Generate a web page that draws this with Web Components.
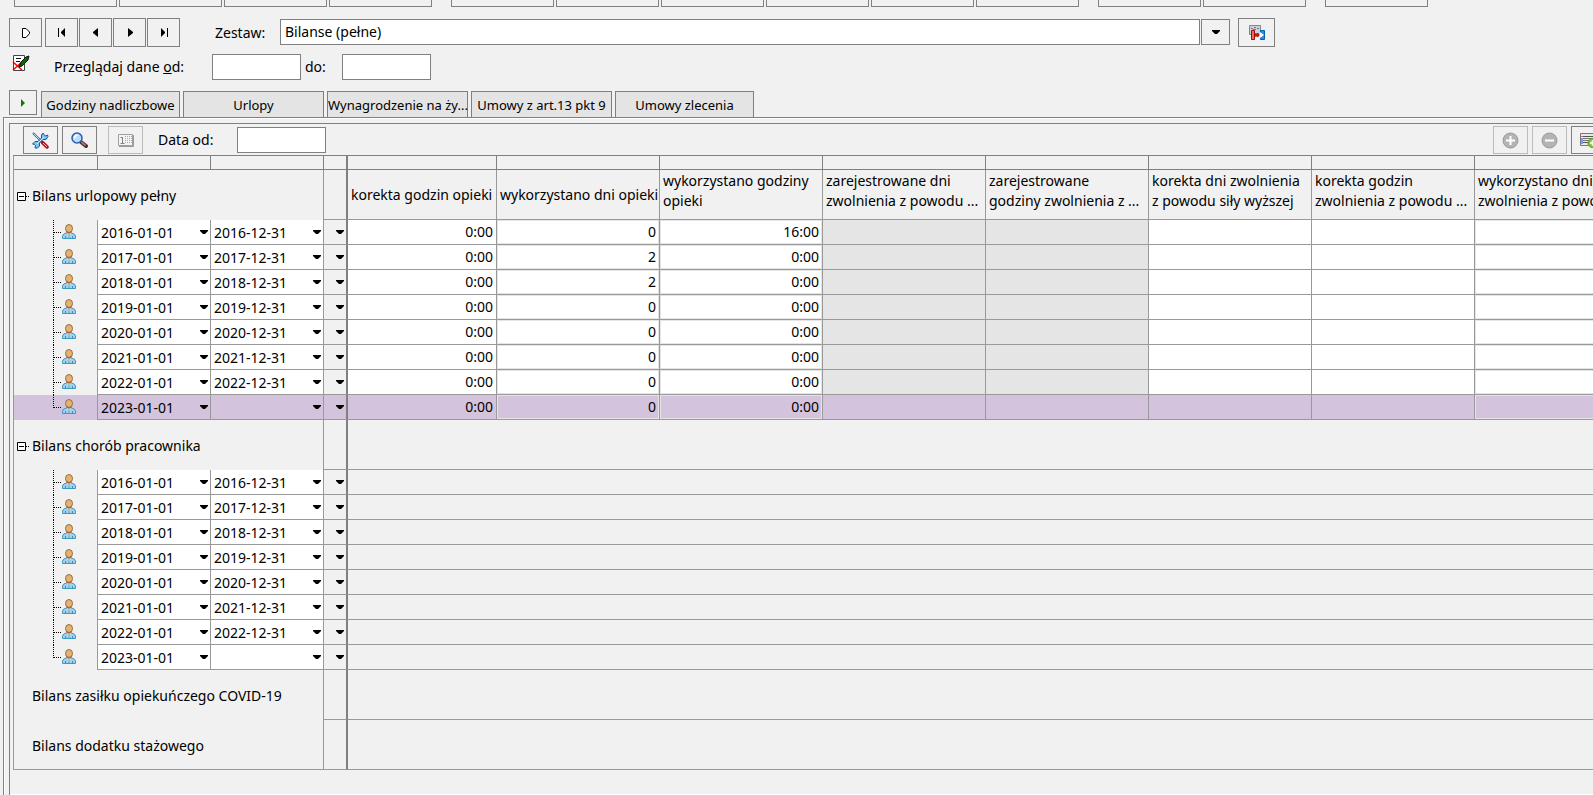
<!DOCTYPE html>
<html lang="pl">
<head>
<meta charset="utf-8">
<title>Bilanse</title>
<style>
html, body { margin: 0; }
body {
  --face: #f1f1f1; --edge: #808080; --line: #999; --dim: #bcbcbc; --muted: #e5e5e5; --pick: #d3c3dd;
  background: var(--face); color: #000;
  font: 14px/20px "Noto Sans", "Open Sans", sans-serif;
}
</style>
</head>
<body>
<balance-app></balance-app>
<script>
const ICONS = {
  run: [8, 10, '<path d="M.5.5H4L7.500 4v1.500L4 9.500H.5z" fill="#fff" stroke="#000"/>'],
  first: [8, 10, '<path d="M0 0h1v9H0zM7 0v9L3 5V4z"/>'],
  prev: [8, 10, '<path d="M6 0v9L1 5V4z"/>'],
  next: [8, 10, '<path d="M2 0v9l5-4V4z"/>'],
  last: [8, 10, '<path d="M7 0h1v9H7zM1 0v9l4-4V4z"/>'],
  play: [4, 8, '<path d="M0 0v8l4-4z" fill="#008000"/>'],
  down: [8, 4, '<path d="M0 0h8v1L5 4H3L0 1z"/>'],
  edit: [18, 17, '<path d="M1.500 16.500V1.500h11v15z" fill="#fff" stroke="#444"/><path d="M4 4.500h5M4 7.500h4M8 10.500h4" stroke="#111"/><path d="M1 8l9 8M10 8L1 16" stroke="#f00000" stroke-width="1.500"/><path d="M7 13l2-5 5-5 3-1-1 4-6 6z" fill="#066806" stroke="#111"/>'],
  sets: [16, 16, '<path d="M.5.5h11v9H.5z" fill="#ccd0dc" stroke="#858585"/><path d="M2 3.500h2M5 2.500h2M8 3.500h2M4 4.500h3" stroke="#777"/><path d="M2.500 5.500h3v9h-3z" fill="#ee6a50" stroke="#a00c0c"/><path d="M6 8l3 2-3 2z" fill="#b51c1c"/><path d="M11.500 5.500h4v9h-4z" fill="#2f8be0" stroke="#0060b8"/><path d="M8 9h3V7l4 3-4 3v-2H8z" fill="#fff"/><circle cx="8.500" cy="10" r="2" fill="#b51c1c"/>'],
  tools: [17, 17, '<path d="M1 1l9 9" stroke="#225f9f" stroke-width="2"/><path d="M1.500 1.500l8 8" stroke="#bde4ff"/><path d="M10.500 10.500l4.500 4.500" stroke="#b01018" stroke-width="3.500" stroke-linecap="round"/><path d="M11 11l4 4" stroke="#ffc0b8"/><path d="M11 1L9.500 3v3L6 9.500H3L.5 12l2 .5 1 1-.5 2.500h2.500l2-2v-3L11 7.500h3l2-3-.5-1.500-2 1-1.500-1.500z" fill="#7cc0f6" stroke="#1557a5"/><path d="M5 12l7-7" stroke="#d8f0ff"/>'],
  find: [17, 17, '<path d="M10 10l5 4" stroke="#49302e" stroke-width="4" stroke-linecap="round"/><path d="M10.500 10l4 3.500" stroke="#a97668" stroke-width="1.800"/><circle cx="6" cy="6" r="5" fill="#b9defb" stroke="#2c5cae" stroke-width="1.500"/><path d="M3.500 6.500q0-3 3-3.500" stroke="#fff" stroke-width="1.500" fill="none"/>'],
  count: [16, 13, '<path d="M.5.5h14v11H.5z" fill="#f4f4f4" stroke="#a0a0a0"/><path d="M15.500 1v11.500H1" stroke="#999" fill="none"/><path d="M2.500 3.500H4M4.500 3v6M2.500 9.500h4" stroke="#808080" fill="none"/><path d="M7.500 2v8M9.500 2v8M11.500 2v8M13.500 2v8" stroke="#aaa" stroke-dasharray="1 1"/>'],
  plus: [17, 17, '<circle cx="8.500" cy="8.500" r="7.500" fill="#b4b4b4" stroke="#989898"/><path d="M8.500 4v9M4 8.500h9" stroke="#fff" stroke-width="2"/>'],
  minus: [17, 17, '<circle cx="8.500" cy="8.500" r="7.500" fill="#b4b4b4" stroke="#989898"/><path d="M4 8.500h9" stroke="#fff" stroke-width="2"/>'],
  addRow: [17, 15, '<path d="M.5.5h15v12H.5z" fill="#e8e8ea" stroke="#777"/><path d="M3 3.500h11M3 9.500h11" stroke="#555"/><path d="M1 5h2v6H1z" fill="#7a9cf0"/><path d="M3 5.500h11M3 7.500h8" stroke="#777"/><path d="M1 3.500h2" stroke="#e07070"/><circle cx="12.500" cy="10" r="4.500" fill="#86c440" stroke="#4f9a20"/><path d="M12.500 7.500v5M10 10h5" stroke="#fff" stroke-width="1.500"/>'],
  fold: [12, 9, '<path d="M.5.5h8v8h-8z" fill="#fff" stroke="#000"/><path d="M2 4.500h5M9 4.500h1M11 4.500h1" stroke="#000"/>']
};
const PERSON = '<g transform="translate(48 4)"><path d="M.5 14.500V12q.5-2.500 4-3h5q3.500.5 4 3v2.500z" fill="#a3d0f2" stroke="#3e9abf"/><path d="M5 9l2 5 2-5z" fill="#d8f2f4"/><path d="M7 10v5" stroke="#3ba9a0"/><path d="M3.500 12v3M10.500 12v3" stroke="#3e92b8"/><ellipse cx="7" cy="4.500" rx="3.500" ry="4" fill="#dfb574" stroke="#a5683a"/><path d="M4.500 7.500q2.500 3 5 0" stroke="#b5623c" stroke-width="1.500" fill="none"/></g>';

function svg(name) {
  const [w, h, body] = ICONS[name];
  return `<svg width="${w}" height="${h}" viewBox="0 0 ${w} ${h}" fill="#000" aria-hidden="true">${body}</svg>`;
}
function define(tag, render) {
  customElements.define(tag, class extends HTMLElement {
    constructor() { super(); this.attachShadow({ mode: 'open' }); }
    connectedCallback() { this.shadowRoot.innerHTML = render(this); }
  });
}

/* Square push button with an icon; its box size comes from --w and --h. */
define('icon-button', el => `
<style>
:host { display: block; flex: none; }
button { display: flex; align-items: center; justify-content: center; box-sizing: border-box; padding: 0;
  width: var(--w, 35px); height: var(--h, 28px); background: none; border: 1px solid var(--edge); }
button:disabled { border-color: var(--dim); }
svg { display: block; }
</style>
<button type="button" aria-label="${el.getAttribute('label')}" ${el.hasAttribute('disabled') ? 'disabled' : ''}>${svg(el.getAttribute('icon'))}</button>`);

/* Label followed by an empty date box. */
define('date-box', el => `
<style>
:host { display: flex; align-items: center; flex: none; }
label { width: var(--label); white-space: nowrap; }
input { box-sizing: border-box; width: 89px; height: 26px; margin: 0; padding: 0 3px; border: 1px solid var(--edge); background: #fff; font: inherit; }
</style>
<label for="d"><slot></slot></label><input id="d" type="text">`);

define('module-strip', () => `
<style>
:host { display: flex; overflow: hidden; padding-left: 14px; height: 7px; gap: 19px; }
div { display: flex; gap: 2px; }
button { box-sizing: border-box; width: 103px; height: 7px; padding: 0; background: none; border: 1px solid var(--edge); border-top: 0; }
</style>
${[4, 6, 2, 1].map(n => `<div>${'<button type="button" aria-label="Moduł"></button>'.repeat(n)}</div>`).join('')}`);

define('set-bar', () => `
<style>
:host { display: flex; align-items: center; padding: 0 318px 0 9px; height: 29px; }
icon-button { --w: 33px; --h: 29px; margin-right: 1px; }
.run { margin-right: 3px; }
label { width: 65px; margin-left: 34px; }
select { flex: 1; min-width: 0; height: 26px; box-sizing: border-box; margin: 0 1px 0 0; padding: 0 4px; appearance: none;
  border: 1px solid var(--edge); border-radius: 0; background: #fff; color: #000; font: inherit; }
.drop { --w: 29px; --h: 26px; margin-right: 8px; }
.sets { --w: 37px; margin: 0; }
select, .drop { align-self: flex-start; margin-top: 1px; }
</style>
<icon-button class="run" icon="run" label="Uruchom"></icon-button>
<icon-button icon="first" label="Pierwszy"></icon-button>
<icon-button icon="prev" label="Poprzedni"></icon-button>
<icon-button icon="next" label="Następny"></icon-button>
<icon-button icon="last" label="Ostatni"></icon-button>
<label for="s">Zestaw:</label>
<select id="s"><option>Bilanse (pełne)</option></select>
<icon-button class="drop" icon="down" label="Rozwiń"></icon-button>
<icon-button class="sets" icon="sets" label="Zestawy"></icon-button>`);

define('range-bar', () => `
<style>
:host { display: flex; align-items: center; padding-left: 12px; height: 26px; }
svg { flex: none; align-self: flex-start; margin-right: 24px; }
.from { --label: 158px; }
.to { --label: 37px; margin-left: 4px; }
</style>
${svg('edit')}
<date-box class="from">Przeglądaj dane <u>o</u>d:</date-box>
<date-box class="to">do:</date-box>`);

define('tab-strip', () => `
<style>
:host { display: flex; align-items: flex-start; padding-left: 9px; height: 27px; }
icon-button { --w: 28px; --h: 25px; margin-right: 4px; }
nav { display: flex; gap: 3px; align-self: flex-end; }
button { box-sizing: border-box; width: 141px; height: 26px; padding: 0; border: 1px solid var(--edge); border-bottom: 0;
  background: #e4e4e4; color: #000; font: inherit; font-size: 13px; white-space: nowrap; }
button:first-child, button:last-child { width: 139px; }
</style>
<icon-button icon="play" label="Pokaż"></icon-button>
<nav>${['Godziny nadliczbowe', 'Urlopy', 'Wynagrodzenie na ży...', 'Umowy z art.13 pkt 9', 'Umowy zlecenia']
  .map(t => `<button type="button">${t}</button>`).join('')}</nav>`);

define('sheet-panel', () => `
<style>
:host { display: flex; flex: 1; margin-left: 3px; padding: 5px 0 0 5px; border: solid var(--edge); border-width: 1px 0 0 1px; box-shadow: inset 1px 1px #fff; }
section { flex: 1; min-width: 0; overflow: hidden; padding: 2px 0 0 3px; border: solid var(--edge); border-width: 1px 0 0 1px; box-shadow: inset 0 -1px #fff; }
</style>
<section><slot></slot></section>`);

define('grid-toolbar', () => `
<style>
:host { display: flex; align-items: center; height: 28px; margin: 0 -13px 1px 0; padding-left: 10px; gap: 4px; }
.count { margin-left: 7px; }
date-box { --label: 79px; margin: 0 auto 0 11px; }
</style>
<icon-button icon="tools" label="Narzędzia"></icon-button>
<icon-button icon="find" label="Szukaj"></icon-button>
<icon-button class="count" icon="count" label="Licznik" disabled></icon-button>
<date-box>Data od:</date-box>
<icon-button icon="plus" label="Dodaj" disabled></icon-button>
<icon-button icon="minus" label="Usuń" disabled></icon-button>
<icon-button icon="addRow" label="Dodaj wiersz"></icon-button>`);

/* Connector lines and the person mark in front of a balance row. */
define('tree-node', el => {
  const last = el.hasAttribute('last');
  return `
<style>:host, svg { display: block; height: 25px; }</style>
<svg width="83" height="25" fill="none" aria-hidden="true"><path d="M39.500 0V${last ? 13 : 25}M40 12.500h7" stroke="#000" stroke-dasharray="1 1"/>${PERSON}</svg>`;
});

define('date-field', el => `
<style>
:host { display: flex; align-items: center; height: 24px; }
input { flex: 1; min-width: 0; height: 24px; box-sizing: border-box; border: 0; padding: 0 0 0 3px; margin: 0; background: none; color: #000; font: inherit; }
button { flex: none; padding: 0 2px; height: 24px; border: 0; background: none; }
svg { display: block; }
</style>
<input type="text" aria-label="Data" value="${el.getAttribute('value')}"><button type="button" aria-label="Wybierz datę">${svg('down')}</button>`);

const COLUMNS = [
  ['korekta godzin opieki'], ['wykorzystano dni opieki', 'ro'], ['wykorzystano godziny<br>opieki', 'ro'],
  ['zarejestrowane dni<br>zwolnienia z powodu ...', 'off'], ['zarejestrowane<br>godziny zwolnienia z ...', 'off'],
  ['korekta dni zwolnienia<br>z powodu siły wyższej'], ['korekta godzin<br>zwolnienia z powodu ...'],
  ['wykorzystano dni<br>zwolnienia z powodu ...', 'ro']
];
const YEARS = [2016, 2017, 2018, 2019, 2020, 2021, 2022, 2023];
const DAYS = { 2017: 2, 2018: 2 };

function dates(year) {
  const open = year === 2023;
  return `<td class="tree"><tree-node ${open ? 'last' : ''}></tree-node></td>
<td class="date"><date-field value="${year}-01-01"></date-field></td>
<td class="date"><date-field value="${open ? '' : year + '-12-31'}"></date-field></td>
<td class="more"><button type="button" aria-label="Więcej">${svg('down')}</button></td>`;
}
function group(title, cells, folds = true) {
  return `<tr class="group"><th colspan="3" scope="rowgroup"><div>${folds ? `<button type="button" aria-label="Zwiń">${svg('fold')}</button>` : ''}<span>${title}</span></div></th><td class="more"></td>${cells}</tr>`;
}
define('balance-grid', () => {
  const wide = '<td colspan="8"></td>';
  const values = y => ['0:00', DAYS[y] || 0, y === 2016 ? '16:00' : '0:00', '', '', '', '', ''];
  return `
<style>
:host { display: block; overflow: hidden; border: solid var(--line); border-width: 1px 0 0 1px; border-top-color: var(--edge); }
table { border-spacing: 0; table-layout: fixed; width: 1624px; font: inherit; }
td, th { box-sizing: border-box; padding: 0; border: solid var(--line); border-width: 0 1px 1px 0; font-weight: normal; text-align: left; }
.strip td { height: 14px; border-color: var(--edge); }
.strip td:nth-child(4), .more { border-right: 2px solid var(--edge) !important; }
.group > * { height: 50px; }
.group th[colspan] { border-bottom: 0; }
.group div { display: flex; align-items: center; padding-top: 2px; }
.group div button { margin: 0 0 0 3px; }
.group div span { margin-left: 3px; }
.group div span:only-child { margin-left: 18px; }
.group th[scope=col] { padding: 0 0 0 3px; white-space: nowrap; overflow: hidden; }
th.two { vertical-align: top; padding-top: 1px !important; }
tbody:last-child th { border-bottom: 1px solid var(--line) !important; }
.tree { border-bottom: 0; }
.date, .num { background: #fff; }
.num { height: 25px; line-height: 24px; padding-right: 3px; text-align: right; }
.num.ro { box-shadow: inset 0 0 0 1px #e5e5e5; }
.num.off { background: var(--muted); }
.picked td, .picked .num.off { background: var(--pick); }
button { display: block; border: 0; padding: 0; background: none; }
.more button { margin-left: auto; padding: 10px 2px; }
svg { display: block; }
</style>
<table>
<colgroup><col style="width:84px"><col style="width:113px"><col style="width:113px"><col style="width:24px"><col style="width:149px">${'<col style="width:163px">'.repeat(7)}</colgroup>
<tbody><tr class="strip">${'<td></td>'.repeat(12)}</tr>
${group('Bilans urlopowy pełny', COLUMNS.map(([t]) => `<th scope="col" class="${t.includes('<br>') ? 'two' : ''}">${t}</th>`).join(''))}
${YEARS.map(y => `<tr class="${y === 2023 ? 'picked' : ''}">${dates(y)}${values(y).map((v, i) => `<td class="num ${COLUMNS[i][1] || ''}">${v}</td>`).join('')}</tr>`).join('')}</tbody>
<tbody>${group('Bilans chorób pracownika', wide)}
${YEARS.map(y => `<tr>${dates(y)}${wide}</tr>`).join('')}</tbody>
<tbody>${group('Bilans zasiłku opiekuńczego COVID-19', wide, false)}</tbody>
<tbody>${group('Bilans dodatku stażowego', wide, false)}</tbody>
</table>`;
});

define('balance-app', () => `
<style>
:host { display: flex; flex-direction: column; min-height: 100vh; overflow: hidden; }
set-bar { margin: 11px 0 7px; }
range-bar { margin-bottom: 10px; }
</style>
<module-strip></module-strip>
<set-bar></set-bar>
<range-bar></range-bar>
<tab-strip></tab-strip>
<sheet-panel><grid-toolbar></grid-toolbar><balance-grid></balance-grid></sheet-panel>`);
</script>
</body>
</html>
